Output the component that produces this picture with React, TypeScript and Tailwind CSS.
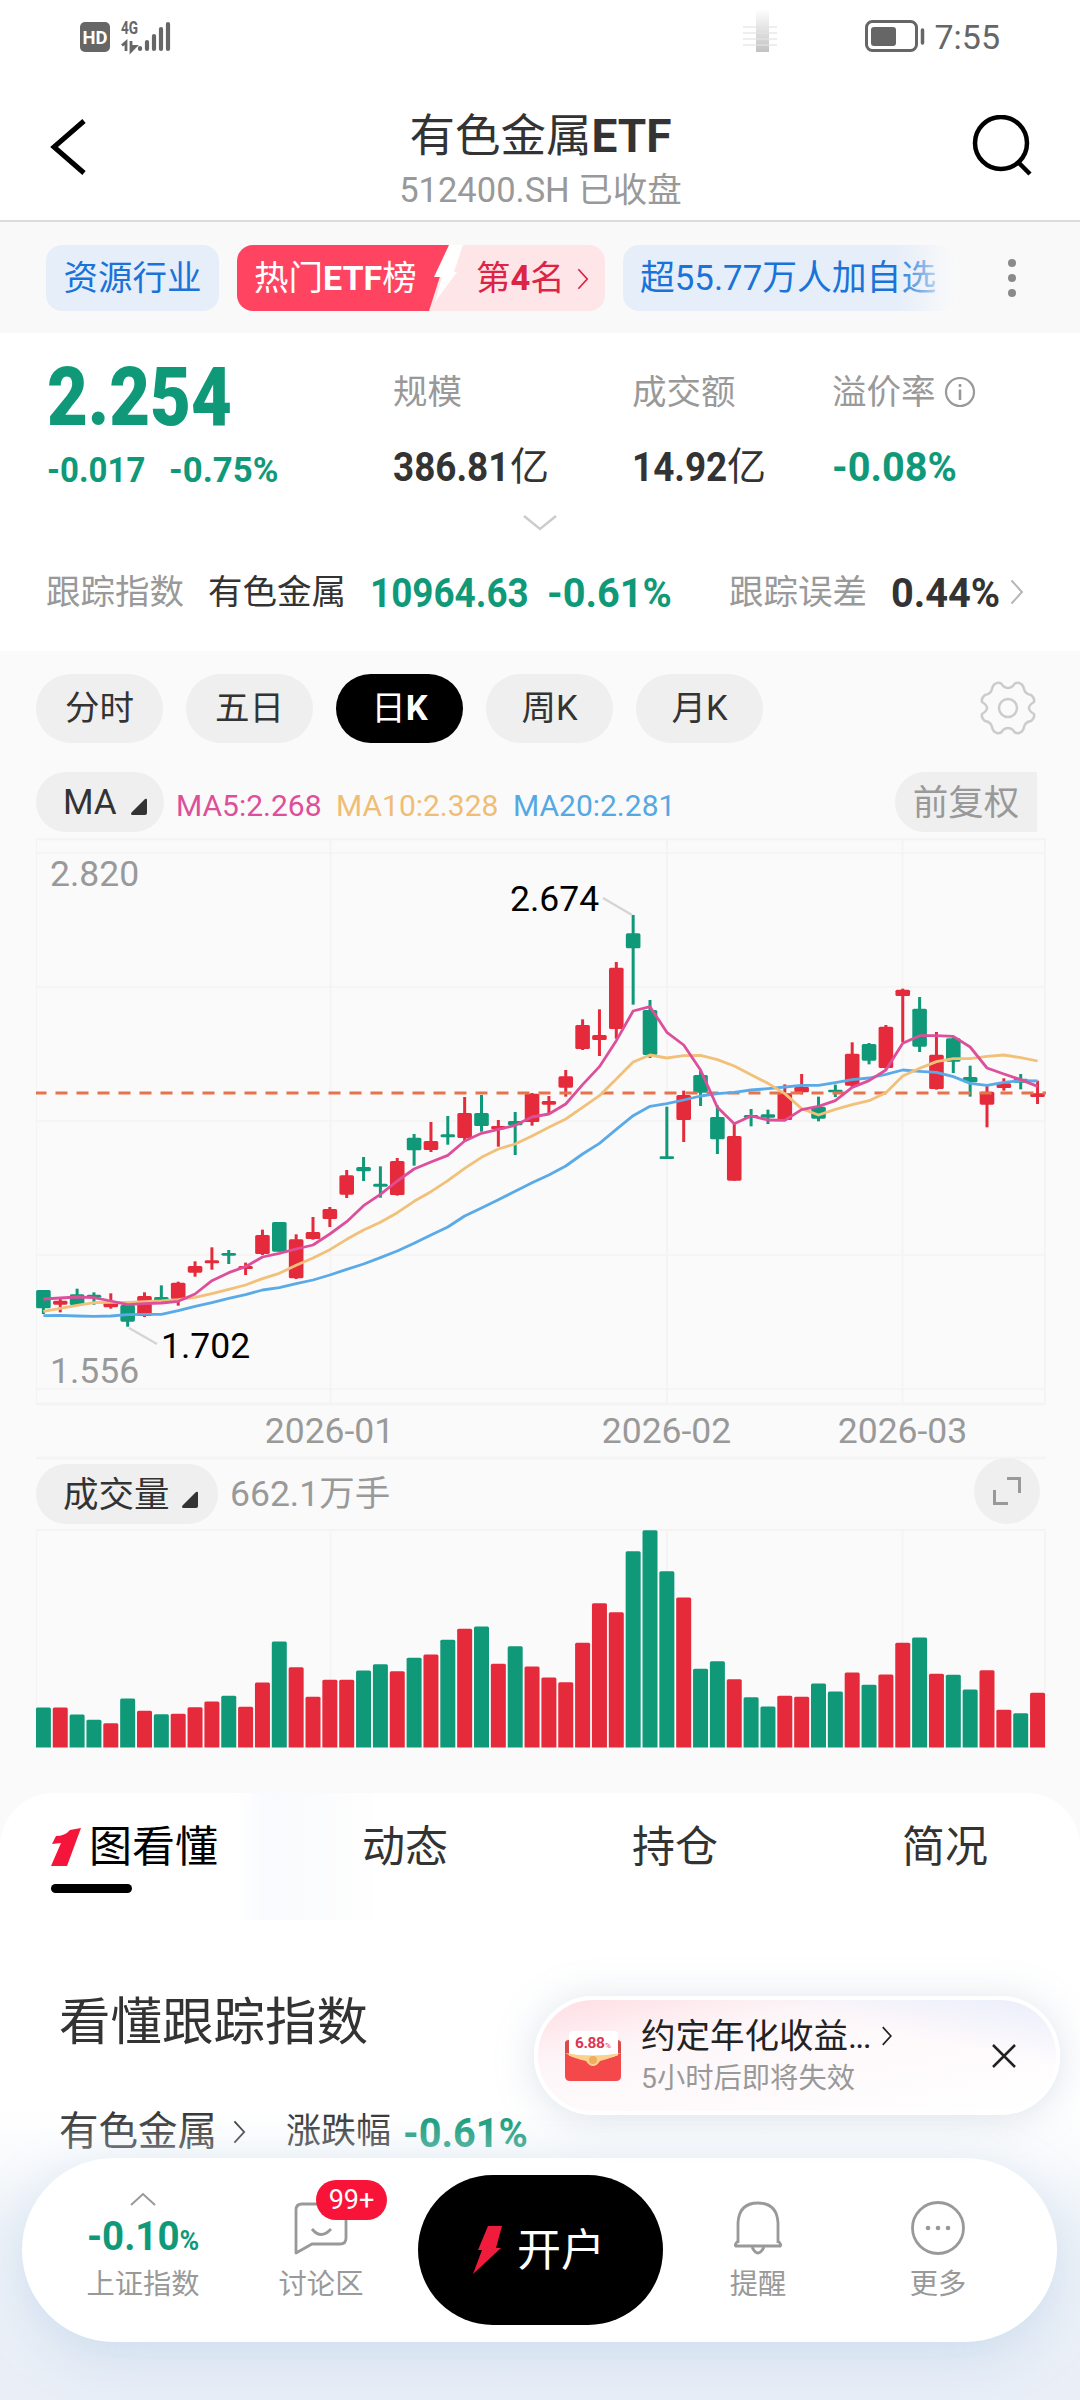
import { ReactNode } from 'react';
import { clsx } from 'clsx';

// [up, body top, body bottom, high, low] in thirds of a pixel below the 2.820 grid line
type Candle = [number, number, number, number, number];

const EARLY: Candle[] = [
  [0, 870, 925, 870, 942], [1, 902, 914, 895, 937], [0, 883, 915, 866, 918], [0, 884, 893, 877, 914],
  [1, 908, 922, 880, 926], [0, 915, 965, 912, 980], [1, 888, 948, 877, 951], [0, 891, 903, 856, 905],
  [1, 848, 897, 845, 917], [1, 798, 818, 784, 830], [1, 781, 790, 742, 809], [0, 759, 767, 750, 792],
  [1, 798, 807, 788, 825], [1, 705, 762, 689, 765], [0, 666, 755, 666, 755], [1, 718, 835, 703, 837],
  [1, 696, 717, 651, 719], [1, 627, 657, 621, 681], [1, 526, 584, 510, 594], [0, 501, 514, 471, 543],
  [0, 551, 560, 499, 593], [1, 483, 585, 474, 587], [0, 413, 451, 402, 497], [1, 423, 450, 366, 456],
  [0, 403, 412, 348, 434], [1, 339, 414, 291, 426], [0, 339, 378, 285, 395], [1, 378, 388, 360, 440],
  [0, 363, 376, 336, 465], [1, 281, 366, 279, 377], [1, 303, 314, 288, 340], [1, 229, 263, 210, 290],
];

const LATE: Candle[] = [
  [1, 525, 597, 508, 600], [1, 555, 570, 478, 618], [1, 353, 537, 336, 566], [0, 250, 295, 195, 464],
  [0, 480, 615, 450, 624], [0, 919, 927, 770, 927], [1, 735, 810, 722, 876], [0, 675, 728, 662, 768],
  [0, 801, 868, 766, 912], [1, 858, 992, 822, 992], [0, 795, 804, 777, 829], [0, 793, 803, 779, 822],
  [1, 730, 810, 703, 812], [1, 710, 727, 672, 733], [0, 770, 806, 740, 814], [0, 719, 727, 704, 741],
  [1, 611, 707, 577, 712], [0, 582, 632, 579, 643], [1, 530, 654, 525, 656], [1, 419, 438, 416, 576],
  [0, 476, 590, 441, 606], [1, 614, 717, 546, 719], [0, 565, 635, 562, 669], [0, 681, 697, 647, 740],
  [1, 725, 764, 708, 832], [1, 700, 714, 685, 722], [0, 686, 698, 672, 718], [1, 730, 741, 692, 762],
];

const shift = (rows: Candle[], d: number) =>
  rows.map(([up, ...v]) => [up, ...v.map((n) => (n + d) / 3 + 15)] as Candle);
const candles = [...shift(EARLY, 441), ...shift(LATE, -9)];

const MA5 = [897, 894, 891, 893, 903, 914, 911, 909, 904, 882, 842, 818, 800, 771, 760, 747, 735, 702, 665, 617, 583, 543, 507, 486, 466, 423, 400, 388, 376, 351, 342, 312, 254, 200, 122, 33, 20, 97, 135, 210, 322, 371, 348, 360, 361, 329, 319, 302, 262, 242, 210, 130, 107, 107, 109, 141, 204, 222, 239, 259];
const MA10 = [934, 925, 916, 908, 907, 907, 905, 903, 899, 892, 881, 868, 855, 836, 820, 796, 774, 749, 718, 690, 667, 638, 604, 575, 542, 505, 472, 447, 432, 408, 382, 357, 322, 287, 237, 186, 165, 174, 167, 166, 179, 198, 224, 250, 281, 326, 345, 328, 314, 302, 278, 228, 205, 185, 176, 176, 169, 165, 173, 183];
const MA20 = [947, 946, 948, 949, 948, 944, 943, 943, 932, 919, 908, 895, 884, 870, 863, 851, 840, 825, 808, 792, 773, 753, 730, 705, 681, 648, 624, 599, 574, 548, 525, 498, 462, 430, 388, 347, 319, 311, 300, 288, 281, 277, 270, 266, 261, 256, 256, 248, 239, 234, 223, 210, 214, 217, 230, 250, 256, 247, 242, 243];

const VOLUMES = [120, 120, 99, 83, 73, 147, 110, 100, 101, 121, 138, 155, 122, 195, 318, 241, 152, 203, 203, 231, 250, 229, 269, 279, 323, 356, 363, 251, 304, 243, 210, 196, 314, 433, 406, 589, 652, 529, 450, 236, 259, 205, 151, 123, 155, 152, 192, 168, 225, 188, 219, 314, 330, 221, 218, 174, 232, 113, 103, 164];

const RED = '#e52b3b';
const GREEN = '#109978';
const cx = (i: number) => 7.4 + i * 16.85;
const line = (v: number[]) => v.map((n, i) => `${cx(i)},${(n + 441) / 3 + 15}`).join(' ');

function Num({ children, className, wide }: { children: ReactNode; className?: string; wide?: boolean }) {
  return (
    <span
      className={clsx(
        'inline-block origin-left whitespace-nowrap font-bold',
        wide ? 'scale-x-[0.98]' : 'scale-x-[0.91]',
        className,
      )}
    >
      {children}
    </span>
  );
}

function Chevron({ className, width = 2.5 }: { className?: string; width?: number }) {
  return (
    <svg viewBox="0 0 14 26" className={className} fill="none" stroke="currentColor" strokeWidth={width}>
      <path d="M1.5 1.5 12 13 1.5 24.5" />
    </svg>
  );
}

function StatusBar() {
  return (
    <div className="flex h-[81px] items-start justify-between pl-20 pr-[80px] pt-[15px] text-[#666]">
      <svg width="92" height="42" viewBox="0 0 92 42">
        <rect x="0" y="7" width="30" height="30" rx="5" fill="#666" />
        <text x="15" y="29" textAnchor="middle" fontSize="18.5" fontWeight="700" fill="#fff" textLength="25" lengthAdjust="spacingAndGlyphs">HD</text>
        <text x="41" y="19" fontSize="18" fontWeight="700" fill="#666" textLength="17" lengthAdjust="spacingAndGlyphs">4G</text>
        <path d="M46 36V27l-4 3.500M51 26v10l4.500-4.500h-4" fill="none" stroke="#666" strokeWidth="2.800" />
        <g stroke="#666" strokeWidth="4.200" strokeLinecap="round">
          <path d="M60 33v1M67 27v7M74 21v13M81 14v20M88 9v25" />
        </g>
      </svg>
      <div className="flex items-start">
        <div className="relative mr-[88px] h-[37px] w-[34px]">
          <div className="absolute -top-[6px] left-[13px] h-[43px] w-[13px] bg-linear-to-b from-transparent to-[#c2c2c2]" />
          <div className="absolute left-0 top-[11px] h-[21px] w-[34px] bg-[repeating-linear-gradient(#e3e3e3_0_2px,transparent_2px_6px)] opacity-60" />
        </div>
        <svg width="62" height="40" viewBox="0 0 62 40" className="mr-[7px]">
          <rect x="1.500" y="6.500" width="50" height="29" rx="6" fill="none" stroke="#666" strokeWidth="3" />
          <rect x="6" y="12" width="25" height="19" rx="3" fill="#666" />
          <path d="M57.500 15v13" stroke="#666" strokeWidth="3.500" strokeLinecap="round" />
        </svg>
        <span className="mt-[4px] text-[34px] leading-[36px]">7:55</span>
      </div>
    </div>
  );
}

function Header() {
  return (
    <header className="flex h-[141px] items-start justify-between border-b-2 border-[#dcdcdc] pl-[50px] pr-[46px]">
      <svg width="40" height="56" viewBox="0 0 40 56" className="mt-[38px]" fill="none" stroke="#000" strokeWidth="5">
        <path d="M34 2 4 28l30 26" />
      </svg>
      <div className="ml-[19px] mt-[27px] text-center">
        <div className="text-[45.500px] leading-[56px] text-[#333]">
          有色金属<b className="text-[46px]">ETF</b>
        </div>
        <div className="mt-[5px] text-[34.500px] leading-[40px] text-[#999]">512400.SH 已收盘</div>
      </div>
      <svg width="62" height="62" viewBox="0 0 62 62" className="mt-[34px]" fill="none" stroke="#000" strokeWidth="4.500">
        <circle cx="29" cy="28" r="26" />
        <path d="m46 47 12 12" />
      </svg>
    </header>
  );
}

function Tags() {
  return (
    <div className="flex h-[111px] items-center bg-[#f9f9f9] pl-[46px] text-[34.500px]">
      <div className="flex h-[66px] w-[173px] items-center justify-center rounded-2xl bg-[#e6eef9] pt-0.5 text-[#1a73d9]">资源行业</div>
      <div className="relative ml-[18px] flex h-[66px] w-[368px] items-center overflow-hidden rounded-2xl bg-[#fee5e8] pt-0.5">
        <svg width="228" height="66" viewBox="0 0 228 66" className="absolute left-0 top-0">
          <path d="M0 0h213l-21 66H0Z" fill="#ff4461" />
          <path d="M212 0h14l-9 27h3l-22 30 7-25h-8Z" fill="#fff" />
        </svg>
        <span className="relative w-[239px] whitespace-nowrap pl-[17px] text-white">
          热门<b className="text-[34px]">ETF</b>榜
        </span>
        <span className="text-[#dc2445]">第<b>4</b>名</span>
        <Chevron className="ml-[12px] h-[22px] w-3 text-[#dc2445]" width={2} />
      </div>
      <div className="relative ml-[18px] flex h-[66px] w-[330px] items-center overflow-hidden rounded-2xl bg-[#e6eef9] pl-[17px] pt-0.5 text-[#1a73d9]">
        <span className="whitespace-nowrap text-[34.800px]">超55.77万人加自选</span>
        <div className="absolute right-0 top-0 h-full w-[58px] bg-linear-to-r from-transparent to-[#f9f9f9]" />
      </div>
      <div className="ml-[55px] flex flex-col gap-[7px]">
        <i className="size-[8px] rounded-full bg-[#8a8a8a]" />
        <i className="size-[8px] rounded-full bg-[#8a8a8a]" />
        <i className="size-[8px] rounded-full bg-[#8a8a8a]" />
      </div>
    </div>
  );
}

function Quote() {
  return (
    <section className="h-[318px] bg-white text-[#333]">
      <div className="flex h-[172px] pl-[47px] text-[40.500px]">
        <div className="w-[346px] text-[#109978]">
          <span className="mt-[14px] inline-block origin-left scale-x-[0.86] whitespace-nowrap text-[82px] font-black leading-[100px]">2.254</span>
          <div className="-mt-[2px] flex text-[35.500px] leading-[50px]">
            <Num className="w-[122px] scale-x-[0.93]">-0.017</Num>
            <Num wide>-0.75%</Num>
          </div>
        </div>
        <div className="w-[239px] pt-[35px]">
          <div className="text-[34.500px] leading-[48px] text-[#999]">规模</div>
          <div className="mt-[27px] flex leading-[48px]"><Num className="w-[117px]">386.81</Num><span className="text-[39px]">亿</span></div>
        </div>
        <div className="w-[200px] pt-[35px]">
          <div className="text-[34.500px] leading-[48px] text-[#999]">成交额</div>
          <div className="mt-[27px] flex leading-[48px]"><Num className="w-[95px]">14.92</Num><span className="text-[39px]">亿</span></div>
        </div>
        <div className="pt-[35px]">
          <div className="flex items-center text-[34.500px] leading-[48px] text-[#999]">
            溢价率
            <svg width="32" height="32" viewBox="0 0 32 32" className="ml-[8px]" fill="none" stroke="#999" strokeWidth="2.200">
              <circle cx="16" cy="16" r="14" />
              <path d="M16 13.500V24M16 8v3" strokeWidth="2.600" />
            </svg>
          </div>
          <div className="mt-[27px] leading-[48px] text-[#109978]"><Num wide>-0.08%</Num></div>
        </div>
      </div>
      <svg width="34" height="18" viewBox="0 0 34 18" className="mx-auto mt-[9px]" fill="none" stroke="#ccc" strokeWidth="2.500">
        <path d="m1 2 16 13L33 2" />
      </svg>
      <div className="mt-[35px] flex items-center pl-[46px] text-[34.500px] leading-[48px]">
        <span className="text-[#999]">跟踪指数</span>
        <span className="ml-[24px] w-[162px]">有色金属</span>
        <Num className="w-[177px] pt-0.5 text-[40.500px] text-[#109978]">10964.63</Num>
        <Num wide className="w-[182px] pt-0.5 text-[40.500px] text-[#109978]">-0.61%</Num>
        <span className="w-[162px] text-[#999]">跟踪误差</span>
        <Num wide className="w-[119px] pt-0.5 text-[40.500px]">0.44%</Num>
        <Chevron className="h-[26px] w-[14px] text-[#b5b5b5]" width={2} />
      </div>
    </section>
  );
}

function Triangle() {
  return (
    <svg width="18" height="18" viewBox="0 0 18 18" className="mt-2">
      <path d="M17 2v13q0 2-2 2H2q-2-1 0-3L15 1q2-1 2 1" fill="#333" />
    </svg>
  );
}

const PERIODS = [
  ['分时', ''],
  ['五日', ''],
  ['日', 'K'],
  ['周', 'K'],
  ['月', 'K'],
];

function Periods() {
  return (
    <div className="flex h-[92px] items-end pl-9 pr-[42px]">
      <div className="flex gap-[23px] text-[34.500px]">
        {PERIODS.map(([label, k], i) => (
          <button
            key={label}
            className={clsx(
              'flex h-[69px] w-[127px] items-center justify-center rounded-full pt-px',
              i === 2 ? 'bg-black text-white' : 'bg-[#efefef] text-[#333]',
            )}
          >
            {label}
            <span className={i === 2 ? 'font-bold' : ''}>{k}</span>
          </button>
        ))}
      </div>
      <svg width="60" height="60" viewBox="-30 -30 60 60" className="mb-[5px] ml-auto" fill="none" stroke="#ccc" strokeWidth="2.500" strokeLinejoin="round">
        <path d="M-11-25Q-15-24-16-19-17-14-23-13-27-10-26-6-21-3-21 0-21 3-26 6-27 10-23 13-17 14-16 19-15 24-11 25-7 26-5 22 0 18 5 22 7 26 11 25 15 24 16 19 17 14 23 13 27 10 26 6 21 3 21 0 21-3 26-6 27-10 23-13 17-14 16-19 15-24 11-25 7-26 5-22 0-18-5-22-7-26-11-25Z" />
        <circle r="9" />
      </svg>
    </div>
  );
}

function PriceChart() {
  return (
    <svg width="1010" height="622" viewBox="0 0 1010 622" className="ml-9 block">
      <g stroke="#f4f4f4" strokeWidth="2">
        <path d="M0 1h1010M0 566h1010M0 620h1010" strokeWidth="2.500" />
        <path d="M0 15h1010M0 149h1010M0 283h1010M0 417h1010M0 551h1010" strokeWidth="1.500" />
        <path d="M0 0v566M294.500 0v566M631 0v566M866.500 0v566M1009 0v566" />
      </g>
      <g fontSize="35.500" fill="#999">
        <text x="14" y="48">2.820</text>
        <text x="14" y="545">1.556</text>
        <text x="293.500" y="605" textAnchor="middle">2026-01</text>
        <text x="630.500" y="605" textAnchor="middle">2026-02</text>
        <text x="866.500" y="605" textAnchor="middle">2026-03</text>
      </g>
      {candles.map(([up, top, bottom, high, low], i) => (
        <g key={i} fill={up ? RED : GREEN}>
          <rect x={cx(i) - 1.500} y={high} width="3" height={low - high} />
          <rect x={cx(i) - 7.300} y={top} width="14.600" height={bottom - top} rx="1.600" />
        </g>
      ))}
      <path d="M0 255h1010" stroke="#e8724a" strokeWidth="3" strokeDasharray="12 9" strokeDashoffset="1.500" />
      <g fill="none" strokeWidth="2.800" strokeLinejoin="round">
        <polyline points={line(MA20)} stroke="#5aaae8" />
        <polyline points={line(MA10)} stroke="#f2c078" />
        <polyline points={line(MA5)} stroke="#de4f9b" />
      </g>
      <path d="m567 60 29 17M93 490l28 16" stroke="#d5d5d5" strokeWidth="2.500" />
      <g fontSize="35.500" fill="#000">
        <text x="474" y="73">2.674</text>
        <text x="125" y="520">1.702</text>
      </g>
    </svg>
  );
}

function VolumeChart() {
  return (
    <svg width="1010" height="219" viewBox="0 0 1010 219" className="ml-9 block">
      <path d="M0 1h1010M0 0v219M294.500 0v219M631 0v219M866.500 0v219M1009 0v219" stroke="#f4f4f4" strokeWidth="2" />
      {VOLUMES.map((v, i) => (
        <path
          key={i}
          d={`M${cx(i) - 7.500} 218.500V${220 - v / 3}q0-1.500 1.500-1.500h12q1.500 0 1.500 1.500V218.500Z`}
          fill={candles[i][0] ? RED : GREEN}
        />
      ))}
    </svg>
  );
}

function ChartPanel() {
  return (
    <section className="h-[1142px] bg-[#fafafa]">
      <Periods />
      <div className="mt-[29px] flex h-[60px] items-center pl-9 text-[30px]">
        <div className="flex h-full w-[128px] items-center gap-[13px] rounded-full bg-[#efefef] pl-[27px] pt-0.5 text-[35px] text-[#333]">
          MA <Triangle />
        </div>
        <span className="ml-[12px] w-[160px] pt-[7px] text-[#de4f9b]">MA5:2.268</span>
        <span className="w-[177px] pt-[7px] text-[#f0bd75]">MA10:2.328</span>
        <span className="pt-[7px] text-[#55a8e2]">MA20:2.281</span>
        <div className="ml-auto mr-[43px] flex h-full w-[142px] items-center justify-center rounded-l-full bg-[#efefef] pt-1 text-[35.500px] text-[#999]">前复权</div>
      </div>
      <div className="mt-[6px]">
        <PriceChart />
      </div>
      <div className="-mt-[3px] flex h-[72px] items-center pl-9 text-[35.500px]">
        <div className="mt-0.5 flex h-[60px] w-[182px] items-center gap-[11px] rounded-full bg-[#efefef] pl-[27px] pt-[3px] text-[#333]">
          成交量 <Triangle />
        </div>
        <span className="ml-[12px] pt-[4px] text-[#999]">662.1万手</span>
        <div className="-mt-[4px] ml-auto mr-10 flex size-[66px] items-center justify-center rounded-full bg-[#efefef]">
          <svg width="30" height="30" viewBox="0 0 30 30" fill="none" stroke="#999" strokeWidth="3">
            <path d="M15 2.500h12.500V17M2.500 14v13.500H16" />
          </svg>
        </div>
      </div>
      <VolumeChart />
    </section>
  );
}

function Detail() {
  return (
    <div className="bg-[#fafafa]">
      <section className="h-[607px] rounded-t-[54px] bg-white text-[#333]">
        <nav className="relative grid h-[127px] grid-cols-4 text-center text-[43px] leading-[108px]">
          <div className="absolute left-[235px] top-0 h-[127px] w-[137px] bg-linear-to-r from-transparent via-[#f9fafd] via-25% to-[#fefefe]" />
          <div className="relative flex items-center self-start pl-[50px] text-black">
            <svg width="33" height="40" viewBox="0 0 33 40" className="mr-[6px]">
              <path d="M31 1 17 39H1L11 16 2 17l4-8q9 0 14-6Z" fill="#f5153b" />
            </svg>
            <span>图看懂</span>
            <i className="absolute left-[51px] top-[91px] h-[9px] w-[81px] rounded-full bg-black" />
          </div>
          <span className="relative">动态</span>
          <span>持仓</span>
          <span>简况</span>
        </nav>
        <h2 className="mt-[68px] pl-[59px] text-[51.500px] leading-[70px]">看懂跟踪指数</h2>
        <div className="mt-[48px] flex items-center pl-[59px] text-[39.500px] leading-[50px]">
          有色金属
          <Chevron className="ml-[16px] mr-[40px] h-6 w-[13px]" width={2} />
          <span className="w-[117px] text-[35px]">涨跌幅</span>
          <Num wide className="pt-0.5 text-[40.500px] text-[#109978]">-0.61%</Num>
        </div>
      </section>
    </div>
  );
}

function Toast() {
  return (
    <div className="absolute left-[534px] top-[1996px] flex h-[119px] w-[526px] items-center rounded-full border-4 border-white bg-linear-to-br from-[#ffdde2] via-[#fdf6f9] via-30% to-white pl-[25px] shadow-[0_4px_40px_rgba(120,145,175,0.26)]">
      <div className="absolute inset-0 rounded-full bg-linear-to-bl from-[#e9eefc] via-transparent via-30% to-transparent" />
      <svg width="60" height="56" viewBox="0 0 60 56" className="relative">
        <path d="M2 15q0-3 4-3h48q4 0 4 3v18H2Z" fill="#d94a4a" />
        <rect x="6" y="3" width="49" height="30" rx="4" fill="#fff" />
        <path d="M2 26q28 12 56 0v22q0 5-5 5H7q-5 0-5-5Z" fill="#f5484b" />
        <path d="M2 25q28 5 56 0-12 6-21 8-3 5-7 5t-7-5Q12 31 2 25" fill="#fbd18c" />
        <circle cx="30" cy="32" r="4" fill="#efae60" />
        <text x="12" y="20" fontSize="15.500" fontWeight="700" fill="#dc3654" textLength="30">6.88</text>
        <text x="42" y="20" fontSize="8" fill="#dc3654">%</text>
      </svg>
      <div className="relative ml-[18px] w-[350px]">
        <div className="flex items-center text-[34.500px] leading-[46px] text-[#222]">
          约定年化收益<span className="tracking-[-0.05em]">...</span>
          <Chevron className="ml-[11px] h-[20px] w-3" width={2.200} />
        </div>
        <div className="text-[28.300px] leading-[40px] text-[#999]">5小时后即将失效</div>
      </div>
      <svg width="26" height="26" viewBox="0 0 26 26" className="relative" fill="none" stroke="#222" strokeWidth="2.500">
        <path d="m2 2 22 22M24 2 2 24" />
      </svg>
    </div>
  );
}

function NavItem({ label, className, children }: { label: string; className: string; children: ReactNode }) {
  return (
    <div className={clsx('flex flex-col items-center pt-[35px]', className)}>
      <div className="flex h-[70px] items-center justify-center">{children}</div>
      <span className="mt-0.5 text-[28.300px] leading-[40px] text-[#999]">{label}</span>
    </div>
  );
}

function BottomBar() {
  return (
    <div className="absolute bottom-0 left-0 h-[290px] w-full overflow-hidden">
      <div className="absolute inset-0 bg-linear-to-b from-white/0 via-[#edf2f8]/90 via-40% to-[#e9eef7]" />
      <div className="absolute left-[22px] top-[48px] flex h-[184px] w-[1035px] rounded-full bg-white shadow-[0_14px_50px_rgba(150,185,220,0.35)]">
        <NavItem label="上证指数" className="w-[242px]">
          <div className="flex flex-col items-center text-[#109978]">
            <svg width="28" height="14" viewBox="0 0 28 14" fill="none" stroke="#999" strokeWidth="2">
              <path d="m2 13 12-11 12 11" />
            </svg>
            <div className="mt-[7px] origin-center scale-x-[0.95] text-[40.500px] font-bold leading-[46px]">
              -0.10<span className="text-[28px]">%</span>
            </div>
          </div>
        </NavItem>
        <NavItem label="讨论区" className="w-[114px]">
          <div className="relative">
            <svg width="54" height="54" viewBox="0 0 54 54" fill="none" stroke="#999" strokeWidth="2.800" strokeLinejoin="round">
              <path d="M8 3h38q6 0 6 6v28q0 6-6 6H18L2 52V9q0-6 6-6ZM18 28q9 11 19 0" />
            </svg>
            <span className="absolute -top-[21px] left-[22px] flex h-10 w-[71px] items-center justify-center rounded-full bg-[#f81338] text-[27px] text-white">99+</span>
          </div>
        </NavItem>
        <div className="ml-[40px] mt-[17px] flex h-[150px] w-[245px] items-center rounded-full bg-black pl-[55px] text-[44px] text-white">
          <svg width="32" height="50" viewBox="0 0 32 50">
            <path d="M15 1h14l-6 22h5L0 49l9-24H5Z" fill="#ef1c3c" />
          </svg>
          <span className="ml-[12px] pt-0.5">开户</span>
        </div>
        <NavItem label="提醒" className="ml-[35px] w-[120px]">
          <svg width="50" height="56" viewBox="0 0 50 56" fill="none" stroke="#999" strokeWidth="2.800">
            <path d="M5 43V23Q6 3 25 3t20 20v20M3 46q-2-1 2-5M47 46q2-1-2-5M2 46h46" />
            <path d="M19 47q6 12 12 0" />
          </svg>
        </NavItem>
        <NavItem label="更多" className="ml-[60px] w-[120px]">
          <svg width="56" height="56" viewBox="0 0 56 56" fill="none" stroke="#999" strokeWidth="2.800">
            <circle cx="28" cy="28" r="25.500" />
            <g fill="#999" stroke="none">
              <circle cx="18" cy="28" r="2.300" />
              <circle cx="28" cy="28" r="2.300" />
              <circle cx="38" cy="28" r="2.300" />
            </g>
          </svg>
        </NavItem>
      </div>
    </div>
  );
}

export default function App() {
  return (
    <div className="relative h-[2400px] w-[1080px] overflow-hidden bg-white font-[Roboto,'Noto_Sans_CJK_SC',sans-serif]">
      <StatusBar />
      <Header />
      <Tags />
      <Quote />
      <ChartPanel />
      <Detail />
      <BottomBar />
      <Toast />
    </div>
  );
}
